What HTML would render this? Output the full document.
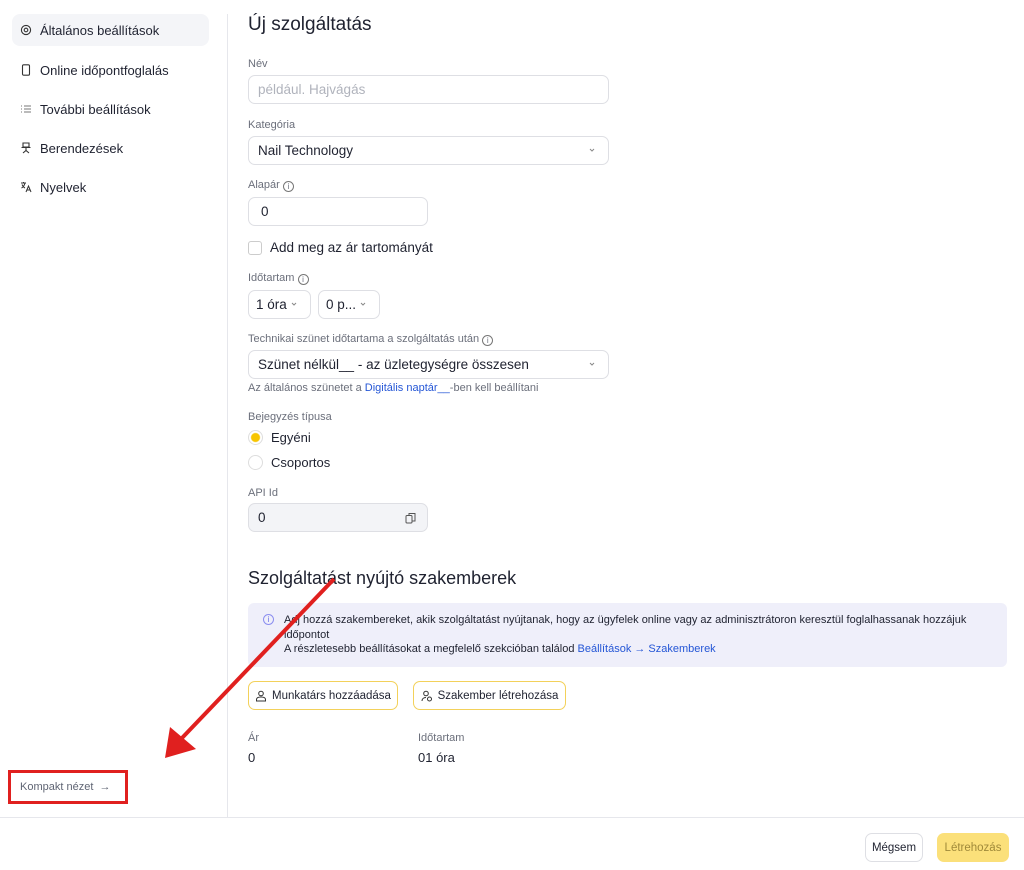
<!DOCTYPE html>
<html><head><meta charset="utf-8"><style>
*{box-sizing:border-box;margin:0;padding:0}
body{width:1024px;height:870px;background:#fff;font-family:"Liberation Sans",sans-serif;color:#1f2230;position:relative;overflow:hidden}
.a{position:absolute}
.nav{left:12px;width:197px;height:32px;border-radius:8px;display:flex;align-items:center;padding-left:8px;font-size:13px;color:#1f2230}
.nav svg{margin-right:8px}
.lbl{font-size:11px;color:#6b6f7b}
.inp{border:1px solid #dedfe4;border-radius:7px;height:29px;display:flex;align-items:center;padding-left:9px;font-size:13.5px}
.chev{position:absolute;right:12px;top:9px}
.btn{border:1px solid #f3d15a;border-radius:7px;height:29px;display:flex;align-items:center;justify-content:center;font-size:11.5px;gap:5px}
</style></head><body>
<div class="a" style="left:227px;top:14px;width:1px;height:803px;background:#e6e7ec"></div>
<div class="a" style="left:0;top:817px;width:1024px;height:1px;background:#e6e7ec"></div>

<div class="a nav" style="top:14px;background:#f4f5f8"><svg width="12" height="12" viewBox="0 0 12 12" fill="none" stroke="#333" stroke-width="1.1"><circle cx="6" cy="6" r="4.6"/><circle cx="6" cy="6" r="1.8"/></svg>Általános beállítások</div>
<div class="a nav" style="top:54px"><svg width="12" height="12" viewBox="0 0 12 12" fill="none" stroke="#333" stroke-width="1.1"><rect x="2.5" y="0.8" width="7" height="10.4" rx="1.2"/></svg>Online időpontfoglalás</div>
<div class="a nav" style="top:93px"><svg width="12" height="12" viewBox="0 0 12 12" fill="none" stroke="#777" stroke-width="1"><path d="M1 3h1M4 3h7M1 6h1M4 6h7M1 9h1M4 9h7"/></svg>További beállítások</div>
<div class="a nav" style="top:132px"><svg width="12" height="12" viewBox="0 0 12 12" fill="none" stroke="#333" stroke-width="1.1"><path d="M3 1h6v4H3zM1.5 5.5h9M6 5.5v3M3 11l3-2.5 3 2.5"/></svg>Berendezések</div>
<div class="a nav" style="top:171px"><svg width="12" height="12" viewBox="0 0 12 12" fill="none" stroke="#333" stroke-width="1"><path d="M1 2h5M3.5 1v1M1.5 7c2-1 3-3 3.5-5M2 3.5c1 2 2 3 3 3.5M6 11l2.5-6 2.5 6M7 9h3"/></svg>Nyelvek</div>

<div class="a" style="left:8px;top:770px;width:120px;height:34px;border:3px solid #e0201f"></div>
<div class="a" style="left:20px;top:781px;font-size:11px;color:#5f6473">Kompakt nézet &nbsp;→</div>

<div class="a" style="left:248px;top:14px;font-size:19px;color:#1f2230">Új szolgáltatás</div>
<div class="a lbl" style="left:248px;top:58px">Név</div>
<div class="a inp" style="left:248px;top:75px;width:361px;color:#b0b3bc">például. Hajvágás</div>
<div class="a lbl" style="left:248px;top:119px">Kategória</div>
<div class="a inp" style="left:248px;top:136px;width:361px">Nail Technology<svg class="chev" width="8" height="8" viewBox="0 0 8 8" fill="none" stroke="#888"><path d="M2 3l2 2 2-2"/></svg></div>
<div class="a lbl" style="left:248px;top:179px">Alapár <span style="display:inline-block;width:11px;height:11px;border:1px solid #777;border-radius:50%;font-size:8px;text-align:center;line-height:9px;vertical-align:-1px">i</span></div>
<div class="a inp" style="left:248px;top:197px;width:180px;padding-left:12px">0</div>
<div class="a" style="left:248px;top:241px;width:14px;height:14px;border:1px solid #ccc;border-radius:3px"></div>
<div class="a" style="left:270px;top:240px;font-size:13.5px">Add meg az ár tartományát</div>
<div class="a lbl" style="left:248px;top:272px">Időtartam <span style="display:inline-block;width:11px;height:11px;border:1px solid #777;border-radius:50%;font-size:8px;text-align:center;line-height:9px;vertical-align:-1px">i</span></div>
<div class="a inp" style="left:248px;top:290px;width:63px;padding-left:7px">1 óra<svg class="chev" width="8" height="8" viewBox="0 0 8 8" fill="none" stroke="#888"><path d="M2 3l2 2 2-2"/></svg></div>
<div class="a inp" style="left:318px;top:290px;width:62px;padding-left:7px">0 p...<svg class="chev" width="8" height="8" viewBox="0 0 8 8" fill="none" stroke="#888"><path d="M2 3l2 2 2-2"/></svg></div>
<div class="a lbl" style="left:248px;top:333px">Technikai szünet időtartama a szolgáltatás után <span style="display:inline-block;width:11px;height:11px;border:1px solid #777;border-radius:50%;font-size:8px;text-align:center;line-height:9px;vertical-align:-1px">i</span></div>
<div class="a inp" style="left:248px;top:350px;width:361px">Szünet nélkül__ - az üzletegységre összesen<svg class="chev" width="8" height="8" viewBox="0 0 8 8" fill="none" stroke="#888"><path d="M2 3l2 2 2-2"/></svg></div>
<div class="a lbl" style="left:248px;top:382px">Az általános szünetet a <span style="color:#2456d6">Digitális naptár__</span>-ben kell beállítani</div>
<div class="a lbl" style="left:248px;top:411px">Bejegyzés típusa</div>
<div class="a" style="left:248px;top:430px;width:15px;height:15px;border-radius:50%;border:1px solid #ddd;background:radial-gradient(circle,#f7c500 4px,#fff 5px)"></div>
<div class="a" style="left:271px;top:430px;font-size:13px">Egyéni</div>
<div class="a" style="left:248px;top:455px;width:15px;height:15px;border-radius:50%;border:1px solid #ddd"></div>
<div class="a" style="left:271px;top:455px;font-size:13px">Csoportos</div>
<div class="a lbl" style="left:248px;top:487px">API Id</div>
<div class="a inp" style="left:248px;top:503px;width:180px;background:#f3f4f7">0<svg class="a" style="right:10px;top:8px" width="12" height="12" viewBox="0 0 12 12" fill="none" stroke="#555"><rect x="1" y="3.5" width="6" height="7.5" rx="1"/><path d="M4 3V1.5h6V9H7.5"/></svg></div>

<div class="a" style="left:248px;top:568px;font-size:18px">Szolgáltatást nyújtó szakemberek</div>
<div class="a" style="left:248px;top:603px;width:759px;height:64px;background:#efeffa;border-radius:6px"></div>
<div class="a" style="left:263px;top:614px;width:11px;height:11px;border:1px solid #8b8ef0;border-radius:50%;font-size:8px;color:#6b6ee8;text-align:center;line-height:9px">i</div>
<div class="a" style="left:284px;top:613px;font-size:11px;line-height:14.5px;width:720px">Adj hozzá szakembereket, akik szolgáltatást nyújtanak, hogy az ügyfelek online vagy az adminisztrátoron keresztül foglalhassanak hozzájuk időpontot<br>A részletesebb beállításokat a megfelelő szekcióban találod <span style="color:#2456d6">Beállítások → Szakemberek</span></div>
<div class="a btn" style="left:248px;top:681px;width:150px"><svg width="12" height="12" viewBox="0 0 12 12" fill="none" stroke="#333"><circle cx="6" cy="3.5" r="2.3"/><path d="M1.5 11v-1.5c0-1.5 1.5-2.5 4.5-2.5s4.5 1 4.5 2.5V11z"/></svg>Munkatárs hozzáadása</div>
<div class="a btn" style="left:413px;top:681px;width:153px"><svg width="12" height="12" viewBox="0 0 12 12" fill="none" stroke="#333"><circle cx="5" cy="3.5" r="2.3"/><path d="M1 11c0-2 1.5-3.5 4-3.5"/><circle cx="8.5" cy="9" r="2"/></svg>Szakember létrehozása</div>
<div class="a lbl" style="left:248px;top:732px">Ár</div>
<div class="a" style="left:248px;top:750px;font-size:13px">0</div>
<div class="a lbl" style="left:418px;top:732px">Időtartam</div>
<div class="a" style="left:418px;top:750px;font-size:13px">01 óra</div>

<div class="a" style="left:865px;top:833px;width:58px;height:29px;border:1px solid #dedfe4;border-radius:7px;font-size:11.5px;display:flex;align-items:center;justify-content:center">Mégsem</div>
<div class="a" style="left:937px;top:833px;width:72px;height:29px;background:#fbe07a;border-radius:7px;font-size:11.5px;color:#a08a3a;display:flex;align-items:center;justify-content:center">Létrehozás</div>

<svg class="a" style="left:0;top:0" width="1024" height="870"><line x1="334" y1="579" x2="182" y2="738" stroke="#e0201f" stroke-width="4"/><polygon points="165,758 170,727 196,749" fill="#e0201f"/></svg>
</body></html>
